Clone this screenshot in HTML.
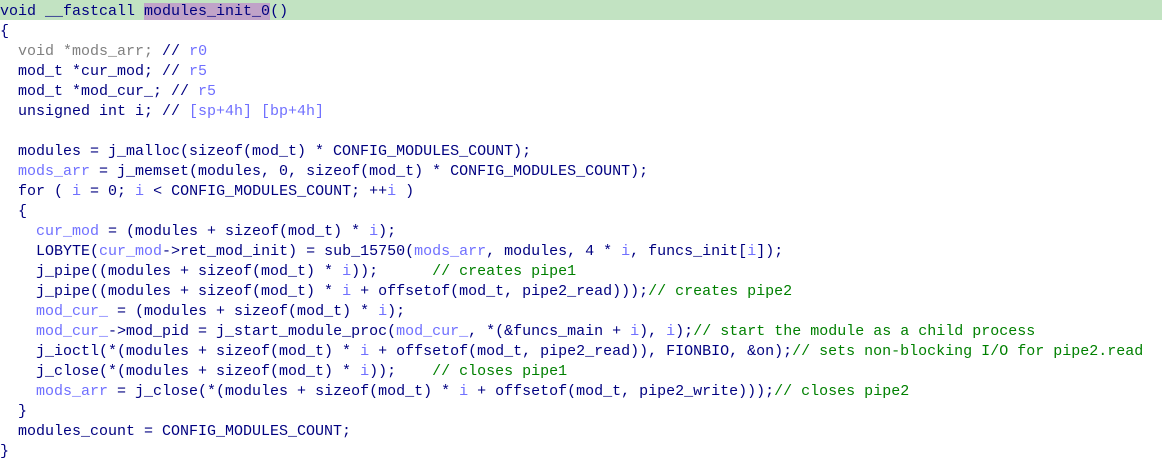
<!DOCTYPE html>
<html><head><style>
body{margin:0;background:#fff;width:1162px;height:462px;overflow:hidden}
pre{margin:0;font-family:"Liberation Mono",monospace;font-size:15px;color:#000080;white-space:pre}
.l{height:20px;line-height:24px;overflow:visible}
.h{background:#c2e3c2}
.s{background:#c0a3c8}
.v{color:#7070ff}
.g{color:#808080}
.c{color:#008000}
</style></head><body><pre>
<div class="l h">void __fastcall <span class="s">modules_init_0</span>()</div><div class="l">{</div><div class="l">  <span class="g">void *mods_arr;</span> // <span class="v">r0</span></div><div class="l">  mod_t *cur_mod; // <span class="v">r5</span></div><div class="l">  mod_t *mod_cur_; // <span class="v">r5</span></div><div class="l">  unsigned int i; // <span class="v">[sp+4h] [bp+4h]</span></div><div class="l"> </div><div class="l">  modules = j_malloc(sizeof(mod_t) * CONFIG_MODULES_COUNT);</div><div class="l">  <span class="v">mods_arr</span> = j_memset(modules, 0, sizeof(mod_t) * CONFIG_MODULES_COUNT);</div><div class="l">  for ( <span class="v">i</span> = 0; <span class="v">i</span> &lt; CONFIG_MODULES_COUNT; ++<span class="v">i</span> )</div><div class="l">  {</div><div class="l">    <span class="v">cur_mod</span> = (modules + sizeof(mod_t) * <span class="v">i</span>);</div><div class="l">    LOBYTE(<span class="v">cur_mod</span>-&gt;ret_mod_init) = sub_15750(<span class="v">mods_arr</span>, modules, 4 * <span class="v">i</span>, funcs_init[<span class="v">i</span>]);</div><div class="l">    j_pipe((modules + sizeof(mod_t) * <span class="v">i</span>));      <span class="c">// creates pipe1</span></div><div class="l">    j_pipe((modules + sizeof(mod_t) * <span class="v">i</span> + offsetof(mod_t, pipe2_read)));<span class="c">// creates pipe2</span></div><div class="l">    <span class="v">mod_cur_</span> = (modules + sizeof(mod_t) * <span class="v">i</span>);</div><div class="l">    <span class="v">mod_cur_</span>-&gt;mod_pid = j_start_module_proc(<span class="v">mod_cur_</span>, *(&amp;funcs_main + <span class="v">i</span>), <span class="v">i</span>);<span class="c">// start the module as a child process</span></div><div class="l">    j_ioctl(*(modules + sizeof(mod_t) * <span class="v">i</span> + offsetof(mod_t, pipe2_read)), FIONBIO, &amp;on);<span class="c">// sets non-blocking I/O for pipe2.read</span></div><div class="l">    j_close(*(modules + sizeof(mod_t) * <span class="v">i</span>));    <span class="c">// closes pipe1</span></div><div class="l">    <span class="v">mods_arr</span> = j_close(*(modules + sizeof(mod_t) * <span class="v">i</span> + offsetof(mod_t, pipe2_write)));<span class="c">// closes pipe2</span></div><div class="l">  }</div><div class="l">  modules_count = CONFIG_MODULES_COUNT;</div><div class="l">}</div></pre></body></html>
